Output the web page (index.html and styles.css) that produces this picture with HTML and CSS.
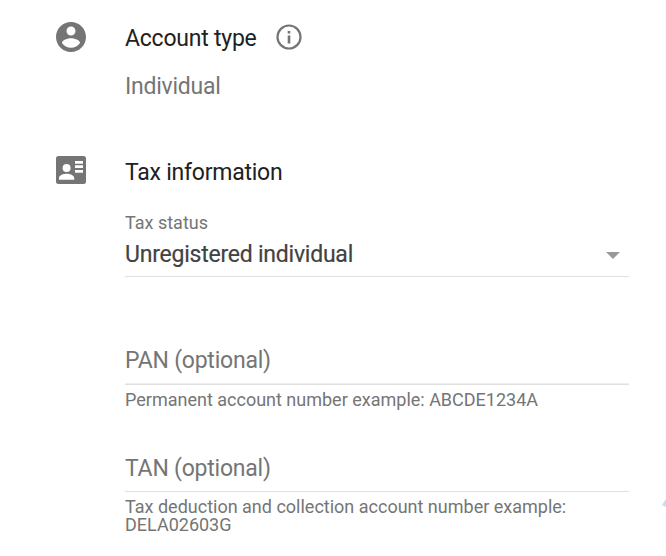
FILE: index.html
```html
<!DOCTYPE html>
<html lang="en">
<head>
<meta charset="utf-8">
<title>Account settings</title>
<link rel="stylesheet" href="styles.css">
</head>
<body>
<main class="page">
  <section class="section account">
    <svg class="icon" viewBox="2 2 20 20"><path d="M12 2C6.480 2 2 6.480 2 12s4.480 10 10 10 10-4.480 10-10S17.520 2 12 2zm0 3c1.660 0 3 1.340 3 3s-1.340 3-3 3-3-1.340-3-3 1.340-3 3-3zm0 14.200c-2.500 0-4.710-1.280-6-3.220.030-1.990 4-3.080 6-3.080 1.990 0 5.970 1.090 6 3.080-1.290 1.940-3.500 3.220-6 3.220z"/></svg>
    <div class="body">
      <h2 class="title"><span>Account type</span>
        <svg class="info" viewBox="0 0 26 26"><circle cx="13" cy="13" r="11.500"/><path d="M11.700 7h2.600v2.600h-2.600zM11.700 11.500h2.600v8h-2.600z"/></svg>
      </h2>
      <p class="value">Individual</p>
    </div>
  </section>
  <section class="section tax">
    <svg class="icon card" viewBox="0 0 30 28"><path fill-rule="evenodd" d="M2.500 0H27.500Q30 0 30 2.500V25.500Q30 28 27.500 28H2.500Q0 28 0 25.500V2.500Q0 0 2.500 0ZM10.600 8a4 4 0 1 0 0 8 4 4 0 0 0 0-8ZM3 23.700H18.200V22C18.200 19.200 13.600 17.800 10.600 17.800S3 19.200 3 22ZM19 5V7.800H27V5ZM19 9.300V12.100H27V9.300ZM19 14V16.800H27V14Z"/></svg>
    <div class="body">
      <h2 class="title">Tax information</h2>
      <div class="label">Tax status</div>
      <div class="field select"><span>Unregistered individual</span><i class="arrow"></i></div>
      <div class="field pan"><span>PAN (optional)</span></div>
      <div class="hint">Permanent account number example: ABCDE1234A</div>
      <div class="field tan"><span>TAN (optional)</span></div>
      <div class="hint">Tax deduction and collection account number example: DELA02603G</div>
    </div>
  </section>
  <svg class="edge" viewBox="0 0 4 8"><path d="M4 0L0 6L4 8Z"/></svg>
</main>
</body>
</html>
```
FILE: styles.css
```css
* { box-sizing: border-box; margin: 0; padding: 0; }
body { background: #fff; font-family: Roboto, sans-serif; color: #757575; overflow: hidden; }
.page { position: relative; width: 666px; height: 556px; padding: 22px 37px 0 56px; overflow: hidden; }
.section { display: flex; align-items: flex-start; gap: 39px; }
.account { height: 134px; }
.icon { width: 30px; height: 30px; fill: #757575; flex: none; }
.card { height: 28px; }
.body { flex: 1; }
.title, .value, .field { font-size: 23px; letter-spacing: -0.23px; }
.title { display: flex; align-items: center; gap: 19px; height: 32px; font-weight: 400; color: #212121; }
.info { width: 26px; height: 26px; margin-bottom: 2px; fill: #757575; }
.info circle { fill: none; stroke: #757575; stroke-width: 2.2; }
.value { margin-top: 17px; line-height: 32px; }
.label { margin-top: 24px; height: 22px; font-size: 18px; line-height: 22px; }
.field { display: flex; align-items: center; border-bottom: 1px solid #e0e0e0; }
.select { justify-content: space-between; height: 43px; padding: 0 9px 0 0; color: #424242; }
.select span { margin-bottom: 2px; -webkit-text-stroke: 0.2px #424242; }
.arrow { margin-top: 1px; border: 7px solid transparent; border-top-color: #999; border-bottom: 0; }
.pan { margin-top: 60px; height: 48px; box-shadow: inset 0 -1px #eee; }
.tan { margin-top: 35px; height: 48px; padding-top: 2px; }
.hint { margin-top: 6px; font-size: 18px; line-height: 18px; }
.edge { position: absolute; right: 0; top: 499px; width: 4px; height: 8px; fill: #c6dafc; }
```
